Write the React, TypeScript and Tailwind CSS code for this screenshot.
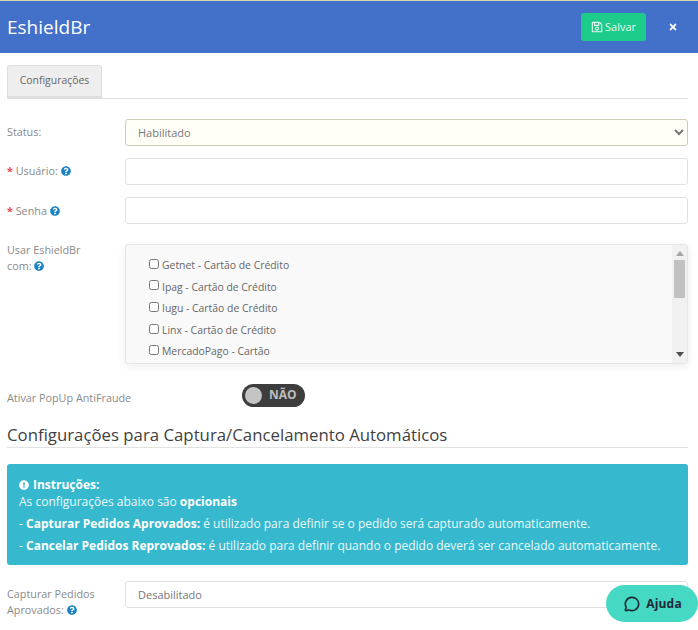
import { FaExclamationCircle, FaQuestionCircle, FaRegSave, FaTimes } from "react-icons/fa";
import { MessageCircle } from "lucide-react";

const gateways = [
    "Getnet - Cartão de Crédito",
    "Ipag - Cartão de Crédito",
    "Iugu - Cartão de Crédito",
    "Linx - Cartão de Crédito",
    "MercadoPago - Cartão",
];

const Help = () => <FaQuestionCircle className="inline-block size-[10px] text-[#1b82c4] align-[-1px]" />;

const Required = () => <span className="text-[#f0475a] font-bold">* </span>;

export default function App() {
    return (
        <div className="relative h-[630px] w-[698px] overflow-hidden bg-white font-['Open_Sans',sans-serif] text-[10.8px] text-[#8a8a8a]">
            <div className="h-px bg-[#d8d4b4]" />
            <header className="flex h-[52px] items-center justify-between bg-[#4370c9] pl-[7px] pr-[20px]">
                <h1 className="text-[19px] text-white">EshieldBr</h1>
                <div className="flex items-center gap-[22px]">
                    <button className="flex h-[28px] w-[65px] items-center justify-center gap-[2px] rounded-[3px] bg-[#1dcb8b] text-[11px] text-[#e4f8ef]">
                        <FaRegSave className="size-[12px]" />
                        Salvar
                    </button>
                    <FaTimes className="size-[10px] text-white" />
                </div>
            </header>

            <main className="pl-[7px] pr-[10px]">
                <div className="mt-[12px] flex h-[34px] border-b border-[#dedede]">
                    <div className="flex h-[33px] w-[95px] items-center justify-center rounded-t-[3px] border border-b-[2px] border-[#dedede] bg-[#eeeeee] text-[10.4px] text-[#666]">
                        Configurações
                    </div>
                </div>

                <div className="mt-[20px] flex h-[27px] items-center">
                    <label className="w-[118px] pb-[1px]">Status:</label>
                    <select className="h-[27px] flex-1 rounded-[3px] border border-[#cfcbb4] bg-[#fffff8] pl-[8px] text-[11px] text-[#777]">
                        <option>Habilitado</option>
                    </select>
                </div>

                <div className="mt-[12px] flex h-[27px] items-center">
                    <label className="w-[118px] pb-[1px]">
                        <Required />
                        Usuário: <Help />
                    </label>
                    <input className="h-[27px] flex-1 rounded-[3px] border border-[#e2e2e2]" />
                </div>

                <div className="mt-[12px] flex h-[27px] items-center">
                    <label className="w-[118px] pt-[1px]">
                        <Required />
                        Senha <Help />
                    </label>
                    <input className="h-[27px] flex-1 rounded-[3px] border border-[#e2e2e2]" />
                </div>

                <div className="mt-[20px] flex">
                    <label className="-mt-[2px] w-[118px] leading-[16px]">
                        Usar EshieldBr
                        <br />
                        com: <Help />
                    </label>
                    <div className="flex h-[120px] flex-1 rounded-[3px] border border-[#e6e6e6] bg-[#f9f9f9] shadow-[0_2px_8px_rgba(0,0,0,0.08)]">
                        <div className="flex-1 overflow-hidden pl-[23px] pt-[10px]">
                            {gateways.map((name) => (
                                <label key={name} className="flex h-[21.6px] items-center gap-[3px] text-[10.4px] text-[#666]">
                                    <input type="checkbox" className="m-0 mb-[4px] size-[10px]" />
                                    {name}
                                </label>
                            ))}
                        </div>
                        <div className="flex w-[15px] flex-col items-center bg-[#f1f1f1] pt-[6px]">
                            <svg width="8" height="5" viewBox="0 0 8 5" fill="#a3a3a3">
                                <path d="M4 0 8 5H0z" />
                            </svg>
                            <div className="mt-[4px] h-[38px] w-[11px] bg-[#c1c1c1]" />
                            <svg className="mt-[54px]" width="8" height="5" viewBox="0 0 8 5" fill="#505050">
                                <path d="M0 0h8L4 5z" />
                            </svg>
                        </div>
                    </div>
                </div>

                <div className="mt-[19px] flex h-[24px] items-center">
                    <label className="w-[235px] pt-[7px]">Ativar PopUp AntiFraude</label>
                    <div className="flex h-[23px] w-[63px] items-center gap-[7px] rounded-full bg-[#3d3d3d] pl-[3px]">
                        <span className="size-[17px] rounded-full bg-[#c4c4c4]" />
                        <span className="text-[12px] font-bold text-[#bdbdbd]">NÃO</span>
                    </div>
                </div>

                <h2 className="mt-[17px] h-[24px] border-b border-[#e2e2e2] text-[16.8px] leading-[22px] text-[#3f3f3f]">
                    Configurações para Captura/Cancelamento Automáticos
                </h2>

                <div className="mt-[16px] h-[101px] rounded-[3px] bg-[#36b8ce] px-[12px] pt-[12px] text-[12px] leading-[17px] text-[#ecf9fb]">
                    <p className="font-bold text-white">
                        <FaExclamationCircle className="mr-[4px] inline-block size-[10px] align-[-1px]" />
                        Instruções:
                    </p>
                    <p>
                        As configurações abaixo são <b className="text-white">opcionais</b>
                    </p>
                    <p className="mt-[5px]">
                        - <b className="text-white">Capturar Pedidos Aprovados:</b> é utilizado para definir se o pedido será capturado automaticamente.
                    </p>
                    <p className="mt-[4.5px]">
                        - <b className="text-white">Cancelar Pedidos Reprovados:</b> é utilizado para definir quando o pedido deverá ser cancelado automaticamente.
                    </p>
                </div>

                <div className="mt-[16px] flex">
                    <label className="w-[118px] pt-[5px] leading-[16px]">
                        Capturar Pedidos
                        <br />
                        Aprovados: <Help />
                    </label>
                    <div className="flex h-[27px] flex-1 items-center rounded-[3px] border border-[#e2e2e2] pl-[12px] pt-[1px] text-[11px] text-[#777]">
                        Desabilitado
                    </div>
                </div>
            </main>

            <button className="absolute left-[606px] top-[585px] flex h-[37px] w-[92px] items-center justify-center gap-[6px] rounded-full bg-[#45d8c2] pl-[2px] text-[12px] font-bold tracking-[0.2px] text-[#1f2a3a]">
                <MessageCircle className="size-[16px]" strokeWidth={2.5} />
                Ajuda
            </button>
        </div>
    );
}
